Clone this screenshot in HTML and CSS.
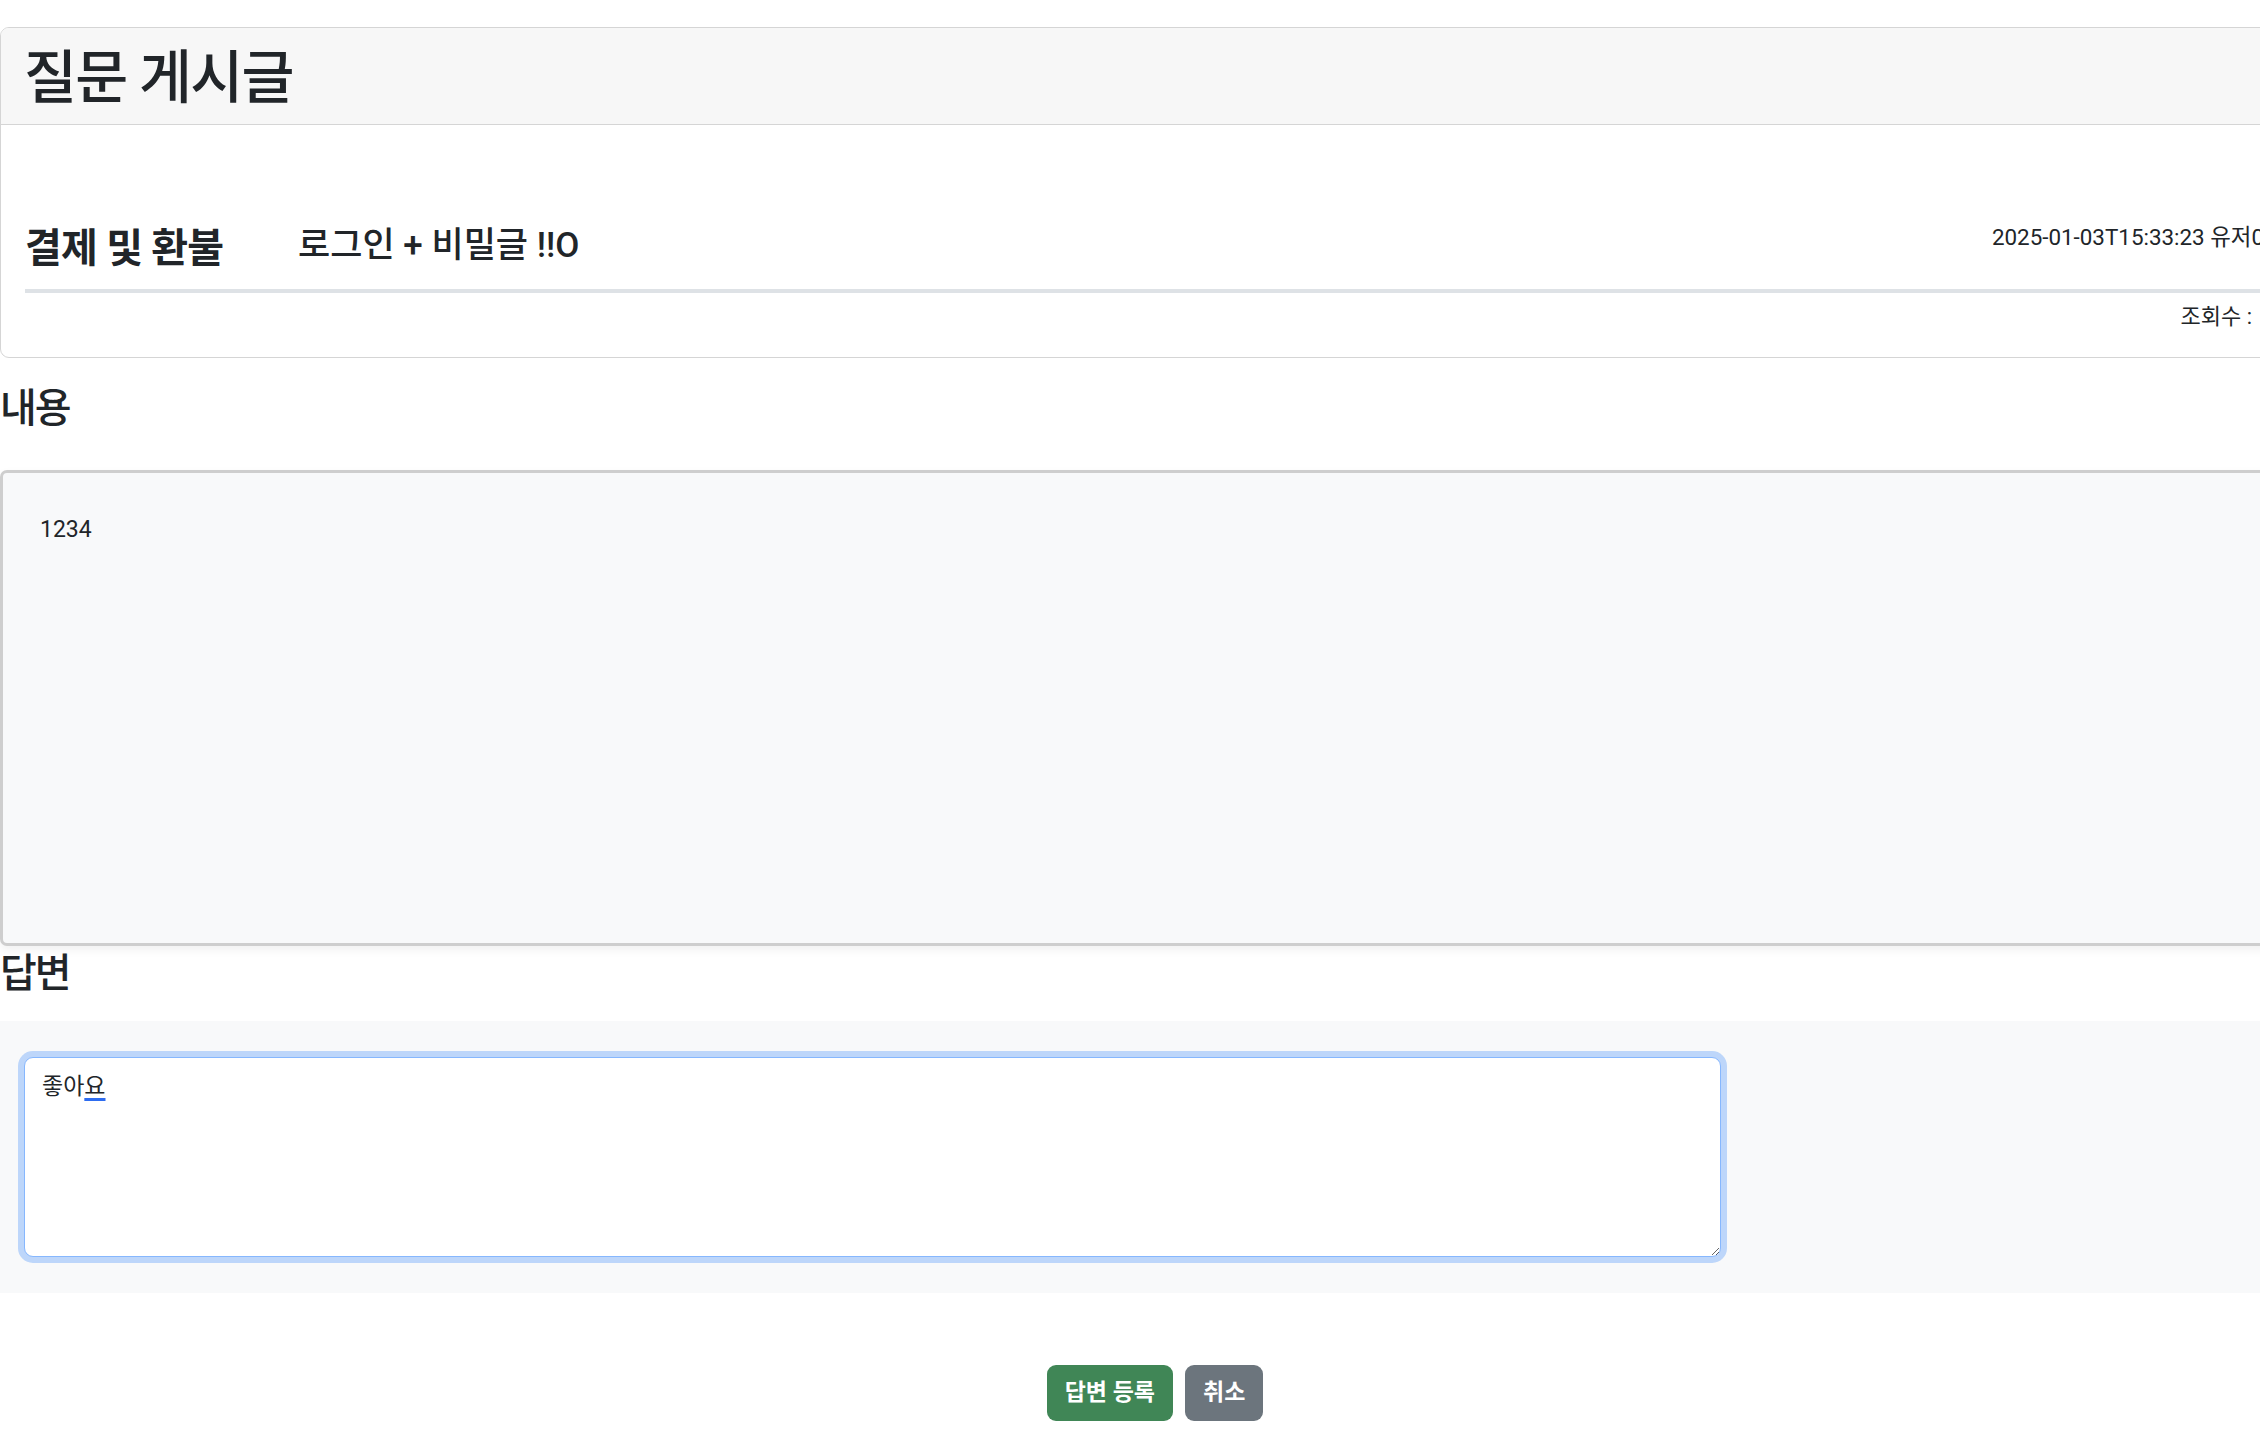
FILE: index.html
```html
<!DOCTYPE html>
<html lang="ko">
<head>
<meta charset="utf-8">
<title>질문 게시글</title>
<link rel="stylesheet" href="styles.css">
</head>
<body>
<div class="page">
  <section class="card">
    <header class="card-header">
      <h1 class="card-title">질문 게시글</h1>
    </header>
    <div class="card-body">
      <div class="post-row">
        <h3 class="category">결제 및 환불</h3>
        <h4 class="post-title">로그인 + 비밀글 !!O</h4>
        <div class="post-meta">2025-01-03T15:33:23 유저0</div>
      </div>
      <hr class="divider">
      <div class="views">조회수 :</div>
    </div>
  </section>

  <h3 class="section-title first">내용</h3>
  <div class="content-box">1234</div>

  <h3 class="section-title second">답변</h3>
  <div class="answer-area">
    <div class="answer-field">
      <textarea class="answer-input">좋아요</textarea>
      <div class="ime-overlay" aria-hidden="true">좋아<span class="ime">요</span></div>
    </div>
  </div>

  <div class="actions">
    <button class="btn btn-success" type="button">답변 등록</button>
    <button class="btn btn-secondary" type="button">취소</button>
  </div>
</div>
</body>
</html>
```

FILE: styles.css
```css
html, body {
  margin: 0;
  padding: 0;
  overflow: hidden;
  background: #ffffff;
}

body {
  font-family: Roboto, "Noto Sans CJK KR", sans-serif;
  font-size: 23px;
  line-height: 1.5;
  color: #212529;
}

.page {
  width: 2310px;
  padding-top: 27px;
}

/* card */
.card {
  border: 1px solid #d5d5d5;
  border-radius: 9px;
  overflow: hidden;
  background: #ffffff;
}

.card-header {
  background: #f7f7f7;
  border-bottom: 1px solid #d5d5d5;
  padding: 16px 23px 11px;
}

.card-title {
  margin: 0;
  font-size: 57.6px;
  font-weight: 500;
  line-height: 69px;
  letter-spacing: -0.03em;
}

.card-body {
  padding: 97px 45px 25px 24px;
}

.post-row {
  display: flex;
  align-items: flex-start;
}

.category {
  margin: 3px 0 0;
  width: 273px;
  flex-shrink: 0;
  font-size: 40px;
  font-weight: 700;
  line-height: 48px;
  letter-spacing: -0.02em;
}

.post-title {
  margin: 2px 0 0;
  font-size: 35px;
  font-weight: 500;
  line-height: 44px;
  letter-spacing: 0;
}

.post-meta {
  margin-left: auto;
  font-size: 22.4px;
  line-height: 31px;
  white-space: nowrap;
}

.divider {
  margin: 16px 0 0;
  border: 0;
  height: 4px;
  background: #dee2e6;
}

.views {
  margin-top: 8px;
  padding-right: 12px;
  text-align: right;
  font-size: 22px;
  line-height: 31px;
}

/* section headings */
.section-title {
  margin: 0;
  font-size: 40px;
  font-weight: 500;
  line-height: 48px;
  letter-spacing: -0.05em;
}

.section-title.first {
  margin-top: 27px;
  margin-bottom: 37px;
}

.section-title.second {
  margin-top: 4px;
  margin-bottom: 23px;
}

/* content */
.content-box {
  box-sizing: border-box;
  height: 476px;
  padding: 40px 37px;
  background: #f8f9fa;
  border: 3px solid #cecece;
  border-radius: 7px;
  box-shadow: 0 4px 10px rgba(0, 0, 0, 0.06);
}

/* answer */
.answer-area {
  background: #f8f9fa;
  padding: 36px 24px;
}

.answer-field {
  position: relative;
  width: 75%;
  height: 200px;
}

.answer-input,
.ime-overlay {
  box-sizing: border-box;
  width: 100%;
  height: 200px;
  margin: 0;
  padding: 12px 17px 8px;
  font-family: Roboto, "Noto Sans CJK KR", sans-serif;
  font-size: 23px;
  line-height: 34px;
  border: 1px solid transparent;
  border-radius: 9px;
}

.answer-input {
  display: block;
  background: #ffffff;
  color: #212529;
  border-color: #86b7fe;
  box-shadow: 0 0 0 6px rgba(13, 110, 253, 0.25);
  outline: none;
  resize: vertical;
}

.ime-overlay {
  position: absolute;
  top: 0;
  left: 0;
  color: transparent;
  pointer-events: none;
  white-space: pre-wrap;
}

.ime {
  text-decoration: underline;
  text-decoration-color: #2d6cf0;
  text-decoration-thickness: 3px;
  text-underline-offset: 4px;
}

/* buttons */
.actions {
  display: flex;
  justify-content: center;
  gap: 12px;
  margin-top: 72px;
}

.btn {
  height: 56px;
  padding: 0 18px;
  border: 0;
  border-radius: 9px;
  color: #ffffff;
  font-family: Roboto, "Noto Sans CJK KR", sans-serif;
  font-size: 23px;
  font-weight: 700;
  letter-spacing: 0;
  line-height: 56px;
}

.btn-success {
  background: #408656;
}

.btn-secondary {
  background: #6c757d;
}
```
